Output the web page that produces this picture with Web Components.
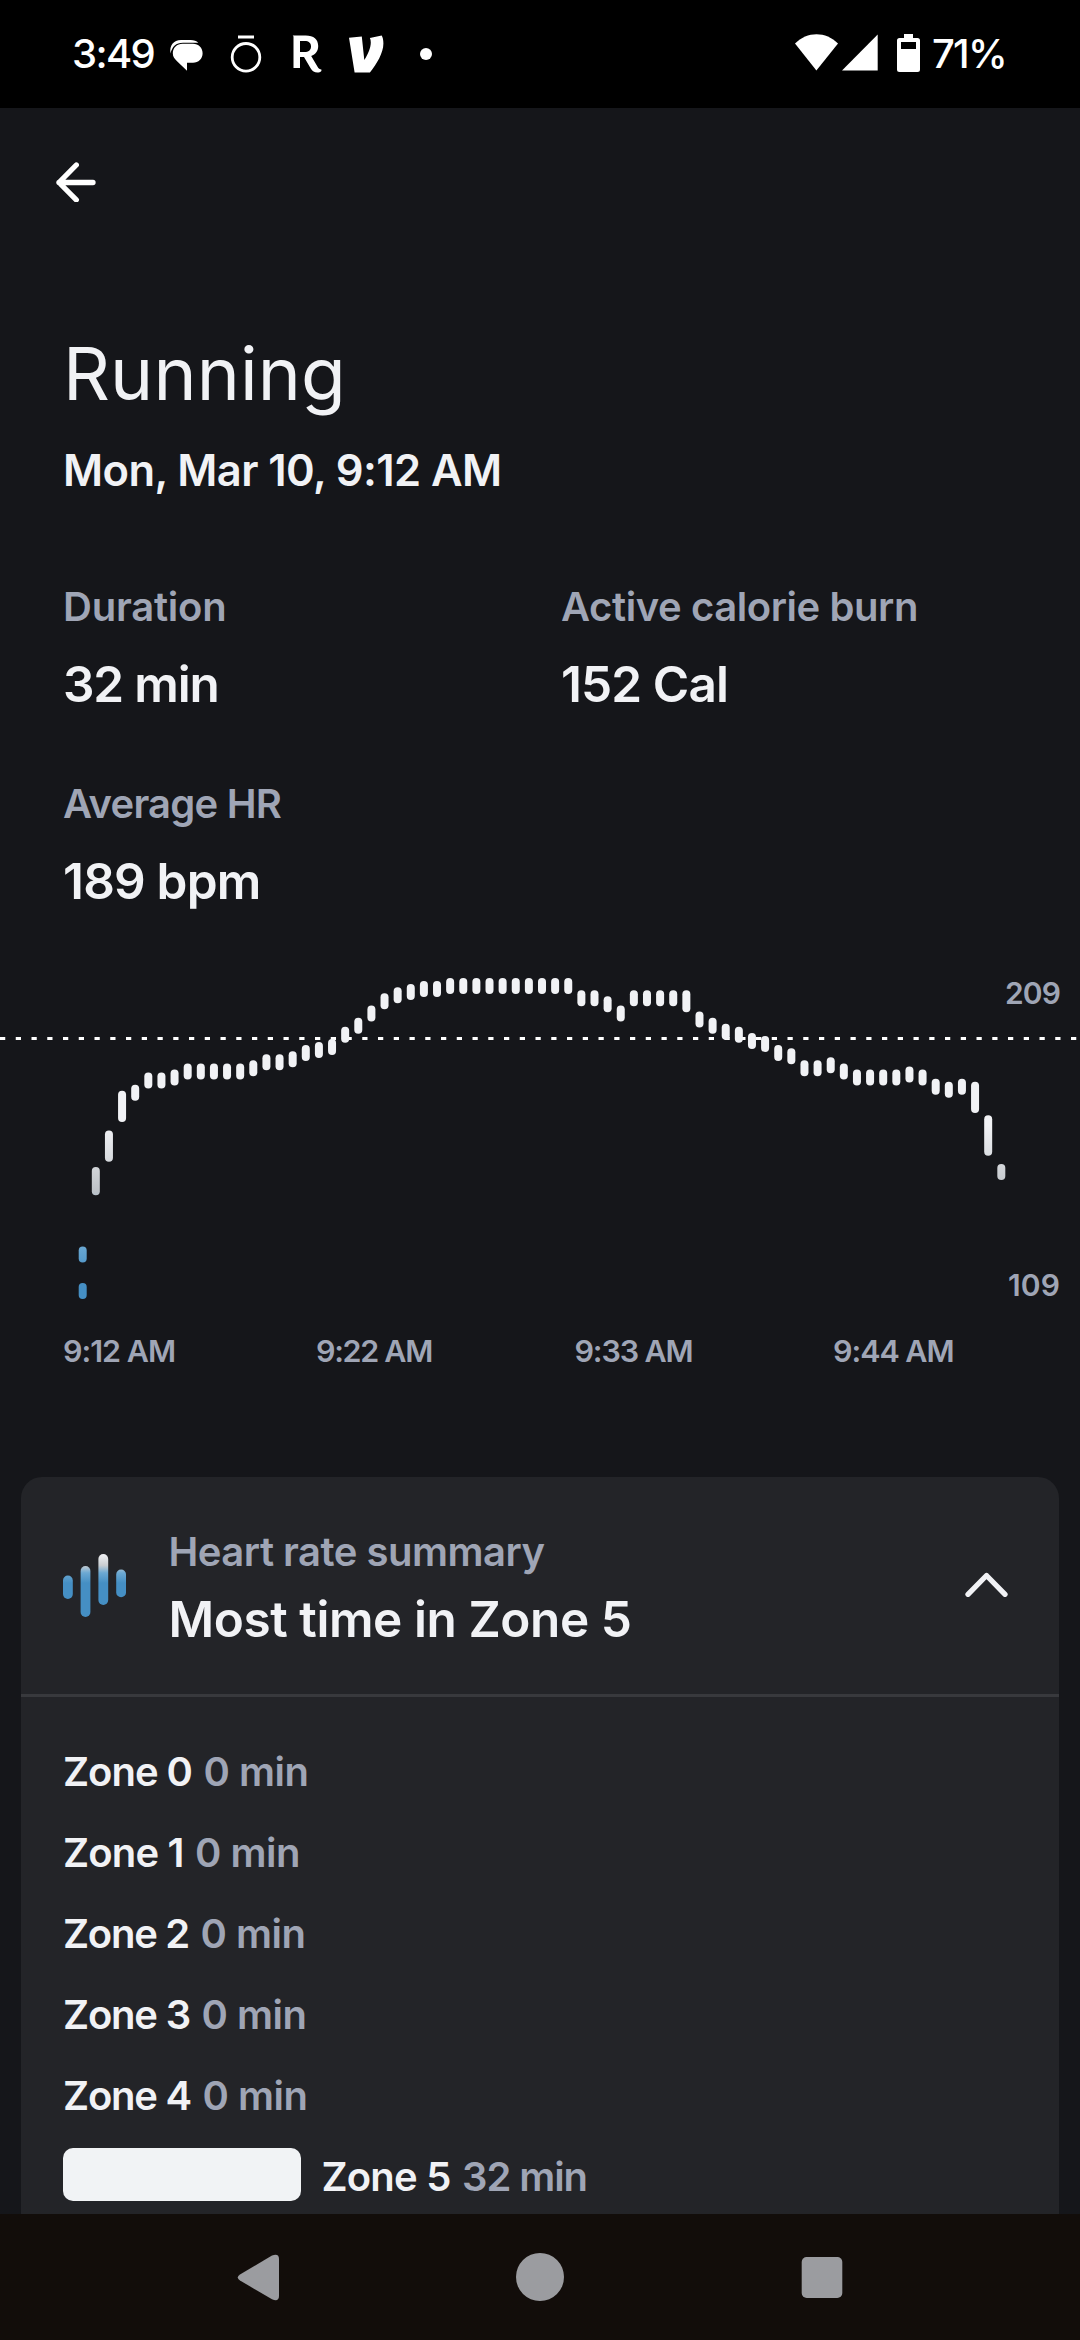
<!DOCTYPE html>
<html lang="en">
<head>
<meta charset="utf-8">
<title>Running</title>
<style>
  body {
    margin: 0;
    background: #15161a;
    font-family: Inter, "Liberation Sans", sans-serif;
    color: #f1f2f5;
  }
</style>
</head>
<body>
<workout-screen></workout-screen>

<script>
const define = (name, html, setup) => {
  const template = document.createElement('template')
  template.innerHTML = html
  customElements.define(name, class extends HTMLElement {
    constructor() {
      super()
      this.root = this.attachShadow({ mode: 'open' })
      this.root.append(template.content.cloneNode(true))
    }
    connectedCallback() {
      if (setup) setup(this, this.root)
    }
  })
}

// text tracked in or out so that it fills the given width
define('tracked-text', `
<style>
  :host {
    display: block;
    white-space: nowrap;
  }
  span {
    display: inline-block;
  }
</style>
<span><slot></slot></span>
`, (host, root) => {
  const width = Number(host.getAttribute('width'))
  const span = root.querySelector('span')
  const natural = span.getBoundingClientRect().width
  host.style.width = `${width}px`
  span.style.letterSpacing = `${(width - natural) / host.textContent.length}px`
})

define('status-bar', `
<style>
  :host {
    display: flex;
    justify-content: space-between;
    align-items: center;
    height: 108px;
    box-sizing: border-box;
    padding: 0 74px 0 72px;
    background: #000;
    color: #fff;
    font-size: 40px;
    font-weight: 500;
    line-height: 50px;
  }
  div {
    display: flex;
    align-items: center;
  }
  div:last-child {
    gap: 2px;
  }
  svg {
    display: block;
    fill: #fff;
  }
</style>
<div>
  <tracked-text width="82">3:49</tracked-text>
  <svg width="281" height="40" viewBox="154 35 281 40">
    <path d="M170.600 54.500c-1.500-8 3-13.500 10.400-13.500h9.500c3.500 0 6 .9 7.800 2.700h-15.300c-7 0-11 3.800-12.400 10.800z"/>
    <path d="M182.500 44.800h10.500c5.500 0 9.600 4 9.600 9.500s-4.100 9.500-9.600 9.500h-6v8l-9.700-9.300c-2.700-2.600-4.500-4.700-4.500-8.200 0-5.500 4.200-9.500 9.700-9.500z"/>
    <path d="M238 36.500h16v3h-16z"/>
    <circle cx="246" cy="58.300" r="13.800" fill="none" stroke="#fff" stroke-width="2.800"/>
    <path fill-rule="evenodd" d="M292.700 36.500h13c8 0 12.500 4 12.500 10.500 0 5-2.700 8.500-7 10l6.200 10.500c1.300 2.200 2.300 3 4 3v1.500c-1 1-2.500 1.500-4 1.500-3 0-5-1.200-6.800-4.200l-6.600-11.300h-4v11h-6.500v-31.500zM300 42v11h4.500c4 0 6.500-2 6.500-5.600 0-3.500-2.300-5.400-6.300-5.400z"/>
    <path d="M349 38.800l12.800-1.300 2.500 23.500c3.500-5.500 6.500-12 6.500-17.500 0-1.800-.3-3.300-.9-4.500l11.800-2.500c1.200 2.200 1.700 4.700 1.700 8 0 9.500-6.700 20.500-13.500 29h-15.300z"/>
    <circle cx="426" cy="55" r="6"/>
  </svg>
</div>
<div>
  <svg width="135" height="40" viewBox="795 35 135 40">
    <path d="M795 44.500c12-12.500 31-12.500 43 0l-21.600 27z"/>
    <path d="M842 71.500l35.700-36v36z"/>
    <path fill-rule="evenodd" d="M904 35h9v4h4.500a2.500 2.500 0 0 1 2.500 2.500v29a2.500 2.500 0 0 1-2.500 2.500h-18a2.500 2.500 0 0 1-2.500-2.500v-29a2.500 2.500 0 0 1 2.500-2.500h4.500zM901 43v7h15v-7z"/>
  </svg>
  <tracked-text width="74">71%</tracked-text>
</div>
`)

define('top-bar', `
<style>
  :host {
    display: flex;
    align-items: center;
    height: 148px;
    padding-left: 56px;
  }
  svg {
    display: block;
    fill: none;
    stroke: #fff;
    stroke-width: 5.300;
    stroke-linecap: round;
    stroke-linejoin: round;
  }
</style>
<svg width="40" height="40" viewBox="0 0 40 40"><path d="M37 20.500H3M20.300 3L3 20.500l17.300 17.300"/></svg>
`)

define('stat-item', `
<style>
  :host {
    display: grid;
    row-gap: 22.500px;
  }
  .label {
    font-size: 40px;
    font-weight: 600;
    line-height: 50px;
    color: #9fa5b5;
  }
  .value {
    font-size: 49.500px;
    font-weight: 600;
    line-height: 60px;
  }
</style>
<div class="label"><slot name="label"></slot></div>
<div class="value"><slot></slot></div>
`)

// [low, high] bpm for each bucket, the first bucket has two readings
const first = [109, 121]
const buckets = [
  [143, 147], [154, 159], [167, 172], 174, 178, 178, 179, 181, 181, 181,
  181, 181, 182, 184, 184, 185, 187, 188, 189, 193,
  196, 200, 204, 206, 207, 208, 208, 209, 209, 209,
  209, 209, 209, 209, 209, 209, 209, 205, 205, 203,
  200, 205, 205, 205, 205, [203, 205], 198, 196, 194, 193,
  191, 190, 187, 186, 182, 182, 183, 181, 179, 179,
  179, 179, 180, 179, 176, 175, 176, [170, 175], [156, 164], 148
]

define('heart-chart', `
<style>
  :host {
    display: block;
    color: #9fa5b5;
    font-weight: 600;
  }
  .plot {
    display: grid;
    height: 420px;
  }
  svg, .range {
    grid-area: 1 / 1;
  }
  svg {
    display: block;
  }
  .range {
    display: flex;
    flex-direction: column;
    justify-content: space-between;
    align-items: flex-end;
    padding: 62px 20px 26.500px 0;
    font-size: 30px;
    line-height: 40px;
  }
  .axis {
    display: grid;
    grid-template-columns: 253px 258.500px 258.500px 1fr;
    padding-left: 63px;
    font-size: 30.500px;
    line-height: 40px;
  }
</style>
<div class="plot">
  <svg width="1080" height="419" viewBox="0 911 1080 419">
    <defs>
      <linearGradient id="heat" gradientUnits="userSpaceOnUse" x1="0" y1="1125" x2="0" y2="1275">
        <stop offset="0" stop-color="#f1f2f5"/>
        <stop offset=".22" stop-color="#d9dce0"/>
        <stop offset=".43" stop-color="#bfc3c8"/>
        <stop offset=".8" stop-color="#6ca9d3"/>
        <stop offset="1" stop-color="#458fc4"/>
      </linearGradient>
    </defs>
    <path d="M0 1038.500H1080" stroke="#fff" stroke-width="3" stroke-dasharray="5.250 10.500"/>
    <g id="bars" fill="url(#heat)"></g>
  </svg>
  <div class="range">
    <tracked-text width="55">209</tracked-text>
    <tracked-text width="52">109</tracked-text>
  </div>
</div>
<div class="axis">
  <tracked-text width="112">9:12 AM</tracked-text>
  <tracked-text width="116">9:22 AM</tracked-text>
  <tracked-text width="118">9:33 AM</tracked-text>
  <tracked-text width="120.500">9:44 AM</tracked-text>
</div>
`, (host, root) => {
  const step = 13.123
  const perBeat = 3.05
  const bar = (index, low, high) => {
    const x = 78.700 + index * step
    const y = 978 + (209 - high) * perBeat
    const height = 16 + (high - low) * perBeat
    return `<rect x="${x}" y="${y}" width="8" height="${height}" rx="4"/>`
  }
  const bars = first.map(bpm => bar(0, bpm, bpm))
  buckets.forEach((bucket, i) => {
    const [low, high] = [].concat(bucket, bucket)
    bars.push(bar(i + 1, low, high))
  })
  root.getElementById('bars').innerHTML = bars.join('')
})

define('zone-row', `
<style>
  :host {
    display: flex;
    height: 52.700px;
    font-size: 40px;
    font-weight: 600;
    line-height: 57px;
  }
  .bar {
    display: none;
    width: 238px;
    margin-right: 20.500px;
    border-radius: 10px;
    background: #f1f3f5;
  }
  :host([filled]) .bar {
    display: block;
  }
  .name {
    margin-right: 11.500px;
  }
  .time {
    color: #9fa5b5;
  }
</style>
<div class="bar"></div>
<div class="name"><slot name="name"></slot></div>
<div class="time"><slot></slot></div>
`)

define('summary-card', `
<style>
  :host {
    display: block;
    margin: 0 21px;
    height: 737px;
    border-radius: 21px 21px 0 0;
    background: #232428;
  }
  header {
    display: flex;
    align-items: center;
    height: 217px;
    padding: 0 50px 0 42px;
    border-bottom: 3px solid #38393d;
  }
  svg {
    display: block;
  }
  .text {
    display: grid;
    row-gap: 11.500px;
    flex: 1;
    padding: 4.500px 0 0 42.500px;
  }
  .label {
    font-size: 40px;
    font-weight: 600;
    line-height: 50px;
    color: #9fa5b5;
  }
  .title {
    font-size: 49.500px;
    font-weight: 600;
    line-height: 60px;
  }
  .zones {
    display: grid;
    row-gap: 28.300px;
    padding: 46px 42px 0;
  }
</style>
<header>
  <svg width="63" height="63" viewBox="0 0 63 63">
    <defs>
      <linearGradient id="pulse" gradientUnits="userSpaceOnUse" x1="0" y1="0" x2="0" y2="63">
        <stop offset="0" stop-color="#f1f2f5"/>
        <stop offset=".18" stop-color="#c9cdd1"/>
        <stop offset=".3" stop-color="#6ca9d3"/>
        <stop offset=".46" stop-color="#458fc4"/>
      </linearGradient>
    </defs>
    <g fill="url(#pulse)">
      <rect x="0" y="21.500" width="9.800" height="23.500" rx="4.900"/>
      <rect x="17.600" y="12" width="9.800" height="51" rx="4.900"/>
      <rect x="35.400" y="0" width="9.800" height="51" rx="4.900"/>
      <rect x="53.200" y="15.500" width="9.800" height="27.800" rx="4.900"/>
    </g>
  </svg>
  <div class="text">
    <tracked-text class="label" width="376">Heart rate summary</tracked-text>
    <tracked-text class="title" width="463">Most time in Zone 5</tracked-text>
  </div>
  <svg width="45" height="30" viewBox="0 0 45 30" fill="none" stroke="#f1f2f5" stroke-width="5.300" stroke-linecap="round" stroke-linejoin="round">
    <path d="M4 23.300L22.500 4.500 41 23.300"/>
  </svg>
</header>
<div class="zones">
  <zone-row><tracked-text slot="name" width="129">Zone 0</tracked-text><tracked-text width="105">0 min</tracked-text></zone-row>
  <zone-row><tracked-text slot="name" width="120.500">Zone 1</tracked-text><tracked-text width="105">0 min</tracked-text></zone-row>
  <zone-row><tracked-text slot="name" width="126">Zone 2</tracked-text><tracked-text width="105">0 min</tracked-text></zone-row>
  <zone-row><tracked-text slot="name" width="127">Zone 3</tracked-text><tracked-text width="105">0 min</tracked-text></zone-row>
  <zone-row><tracked-text slot="name" width="128">Zone 4</tracked-text><tracked-text width="105">0 min</tracked-text></zone-row>
  <zone-row filled><tracked-text slot="name" width="129">Zone 5</tracked-text><tracked-text width="125">32 min</tracked-text></zone-row>
</div>
`)

define('nav-bar', `
<style>
  :host {
    display: grid;
    grid-template-columns: repeat(3, 281.500px);
    justify-content: center;
    justify-items: center;
    align-items: center;
    height: 126px;
    background: #120d0a;
  }
  svg {
    display: block;
    fill: #9b9ca0;
  }
</style>
<svg width="48" height="48" viewBox="0 0 48 48"><path d="M5 21.500L37 2.500q7-2.500 7 3.500v37q0 6-7 3.300L5 27.500q-4.500-3 0-6z"/></svg>
<svg width="48" height="48" viewBox="0 0 48 48"><circle cx="24" cy="24" r="24"/></svg>
<svg width="48" height="48" viewBox="0 0 48 48"><rect x="3.700" y="4" width="40.600" height="41" rx="5"/></svg>
`)

define('workout-screen', `
<style>
  :host {
    display: flex;
    flex-direction: column;
    width: 1080px;
    height: 2340px;
    overflow: hidden;
  }
  .heading {
    padding: 72.500px 63px 0;
  }
  .title {
    font-size: 73px;
    font-weight: 400;
    line-height: 90px;
  }
  .date {
    margin-top: 23.500px;
    font-size: 43.500px;
    font-weight: 600;
    line-height: 56px;
  }
  .stats {
    display: grid;
    grid-template-columns: 498px 1fr;
    row-gap: 64.500px;
    padding: 83.500px 0 0 63px;
  }
  summary-card {
    margin-top: 106px;
  }
  nav-bar {
    margin-top: auto;
  }
</style>
<status-bar></status-bar>
<top-bar></top-bar>
<div class="heading">
  <tracked-text class="title" width="283">Running</tracked-text>
  <tracked-text class="date" width="438.500">Mon, Mar 10, 9:12 AM</tracked-text>
</div>
<div class="stats">
  <stat-item>
    <tracked-text slot="label" width="163.500">Duration</tracked-text>
    <tracked-text width="155.500">32 min</tracked-text>
  </stat-item>
  <stat-item>
    <tracked-text slot="label" width="357">Active calorie burn</tracked-text>
    <tracked-text width="167">152 Cal</tracked-text>
  </stat-item>
  <stat-item>
    <tracked-text slot="label" width="218">Average HR</tracked-text>
    <tracked-text width="197.500">189 bpm</tracked-text>
  </stat-item>
</div>
<heart-chart></heart-chart>
<summary-card></summary-card>
<nav-bar></nav-bar>
`)
</script>
</body>
</html>
